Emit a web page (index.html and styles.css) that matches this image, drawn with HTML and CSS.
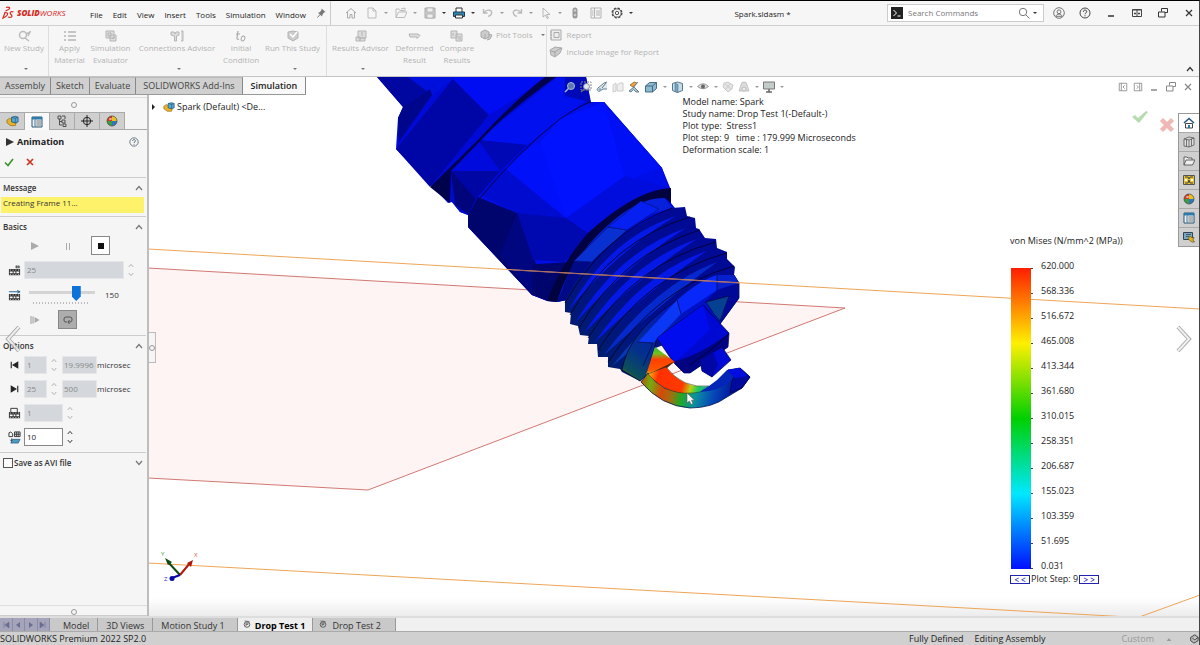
FILE: index.html
```html
<!DOCTYPE html>
<html lang="en">
<head>
<meta charset="utf-8">
<title>Spark.sldasm - SOLIDWORKS Premium 2022</title>
<link rel="stylesheet" href="styles.css">
</head>
<body>
<svg class="defs" aria-hidden="true">
  <defs>
    <symbol id="part" viewBox="0 0 14 12"><path d="M1 5l3-2 3 2 2 3 2 0-1 3H5L1 8z" fill="#e8b32c" stroke="#8a6410" stroke-width=".7"/><path d="M6 2l4-1 3 1v5l-3 1-4-1z" fill="#5aa9cf" stroke="#174f73" stroke-width=".8"/><path d="M6 2l4 1 3-1M10 3v5" fill="none" stroke="#174f73" stroke-width=".6"/></symbol>
    <symbol id="ball" viewBox="0 0 12 12"><path d="M6 6V1a5 5 0 0 1 5 5z" fill="#e8c31f"/><path d="M6 6h5a5 5 0 0 1-5 5z" fill="#2f75c0"/><path d="M6 6v5a5 5 0 0 1-5-5z" fill="#3b9d3b"/><path d="M6 6H1a5 5 0 0 1 5-5z" fill="#d83a25"/><circle cx="6" cy="6" r="5" fill="none" stroke="#444" stroke-width=".7"/><ellipse cx="4.500" cy="4" rx="1.500" ry="1" fill="#fff" opacity=".6"/></symbol>
    <symbol id="sheet" viewBox="0 0 12 12"><path d="M1 1h10v10H1z" fill="#eef4f8" stroke="#2b5572"/><path d="M1 1h10v2.500H1z" fill="#2b7bab"/><path d="M3 5h1M3 7h1M3 9h1" stroke="#2b7bab" stroke-width="1.200"/><path d="M5.500 5H10M5.500 7H10M5.500 9H10" stroke="#555" stroke-width=".8"/><path d="M4.700 3v8" stroke="#2b5572" stroke-width=".5"/></symbol>
    <symbol id="film" viewBox="0 0 14 12"><path d="M1 5h12v7H1z" fill="#333"/><path d="M2 7.500h3v2H2zM6 7.500h2v2H6zM9 7.500h3v2H9z" fill="#f5f5f5"/><path d="M2 6h1M5 6h1M8 6h1M11 6h1M2 11h1M5 11h1M8 11h1M11 11h1" stroke="#f5f5f5"/></symbol>
    <symbol id="restore" viewBox="0 0 12 12"><path d="M4.500 4.500v-3h6v4H8M1.500 5h6.500v5H1.500z" fill="none" stroke="currentColor"/></symbol>
    <symbol id="close" viewBox="0 0 12 12"><path d="M3 3l6 6M9 3l-6 6" fill="none" stroke="currentColor" stroke-width="1.200"/></symbol>
    <symbol id="min" viewBox="0 0 12 12"><path d="M3 9h6" stroke="currentColor" stroke-width="1.500"/></symbol>
    <symbol id="help" viewBox="0 0 12 12"><circle cx="6" cy="6" r="5" fill="none" stroke="currentColor" stroke-width=".9"/><path d="M4.300 4.800c0-2.300 3.500-2.200 3.400-.1 0 1.200-1.700 1.200-1.700 2.500M6 8.300v1" fill="none" stroke="currentColor"/></symbol>
    <symbol id="up" viewBox="0 0 8 6"><path d="M1 5l3-3.500L7 5" fill="none" stroke="currentColor" stroke-width="1.200"/></symbol>
    <symbol id="down" viewBox="0 0 8 6"><path d="M1 1l3 3.500L7 1" fill="none" stroke="currentColor" stroke-width="1.200"/></symbol>
    <symbol id="study" viewBox="0 0 8 8"><circle cx="4" cy="4.500" r="2.800" fill="none" stroke="#555" stroke-width=".9"/><path d="M3 3v3M3 3h2v1.500H3M1.500 1l5 .5" fill="none" stroke="#555" stroke-width=".7"/></symbol>
    <symbol id="cube" viewBox="0 0 14 12"><path d="M1.500 5l4-3.500h7v6l-4 3.500h-7z" fill="#8fb9cf" stroke="#38637b" stroke-width=".9"/><path d="M1.500 5h7l4-3.500M8.500 5v6" fill="none" stroke="#38637b" stroke-width=".9"/></symbol>
  </defs>
</svg>

<header class="titlebar">
  <a class="brand" href="#" aria-label="SOLIDWORKS home">
    <svg width="13" height="14" viewBox="0 0 13 14"><path d="M4 1.500c3-1 5 .5 2.500 2L3.500 5M3.500 6.500c3 0 3 2.500-.5 4.500L1 12l2.200-6M11.500 6C9 5 7 6.500 9 8.500s.5 3.500-3 2.500" fill="none" stroke="#d5281e" stroke-width="1.200"/></svg>
    <span class="wordmark"><b>SOLID</b>WORKS</span>
  </a>
  <nav class="menu">
    <button>File</button><button>Edit</button><button>View</button><button>Insert</button><button>Tools</button><button>Simulation</button><button>Window</button>
  </nav>
  <svg class="pin" width="9" height="10" viewBox="0 0 9 10"><path d="M4.500.5L8.500 4 7 4.500 5.500 6.500 5 8.500 1 4.800 2.800 4.300 4.500 2z" fill="#777"/><path d="M3 6.500L.5 9.500" stroke="#777"/></svg>
  <div class="quick">
    <button class="home" aria-label="Home"><svg class="i" viewBox="0 0 12 12"><path d="M1 6l5-4.500L11 6M2.500 5v6h2.500V7.500h2V11h2.500V5" fill="none" stroke="#aaa"/></svg></button>
    <button aria-label="New"><svg class="i" viewBox="0 0 12 12"><path d="M2 1h5l3 3v7H2zM7 1v3h3" fill="none" stroke="#bbb"/></svg></button><button class="dd" aria-label="New options"></button>
    <button aria-label="Open"><svg class="i" viewBox="0 0 12 12"><path d="M1 10.500V2h3l1 1.500h4V5M1 10.500l2.500-5.500H12l-2.500 5.500zM6 2l4-1v3" fill="none" stroke="#bbb"/></svg></button><button class="dd" aria-label="Open options"></button>
    <button aria-label="Save"><svg class="i" viewBox="0 0 12 12"><path d="M1 1h10v10H1z" fill="#ccc" stroke="#aaa"/><path d="M3 1h6v4H3zM3 7h6v4H3z" fill="#eee" stroke="#aaa" stroke-width=".7"/></svg></button><button class="dd on" aria-label="Save options"></button>
    <button aria-label="Print"><svg class="i" viewBox="0 0 12 12"><path d="M3 5V1h6v4" fill="#fff" stroke="#333"/><path d="M.5 5h11v4.500H.5z" fill="#2e87b5" stroke="#1d3c50"/><path d="M2.500 8h7v3h-7z" fill="#fff" stroke="#333"/></svg></button><button class="dd on" aria-label="Print options"></button>
    <button aria-label="Undo"><svg class="i" viewBox="0 0 12 12"><path d="M1.500 2v4h4M2 5.500C5 1.500 11 3 9.500 6.500 9 8.500 7 9.500 6 9" fill="none" stroke="#bbb" stroke-width="1.400"/></svg></button><button class="dd" aria-label="Undo options"></button>
    <button aria-label="Redo"><svg class="i" viewBox="0 0 12 12"><path d="M10.500 2v4h-4M10 5.500C7 1.500 1 3 2.500 6.500 3 8.500 5 9.500 6 9" fill="none" stroke="#bbb" stroke-width="1.400"/></svg></button><button class="dd" aria-label="Redo options"></button>
    <button aria-label="Select"><svg class="i" viewBox="0 0 12 12"><path d="M3 1l7 6.500H6.500l2 3.500-1.500.5-1.500-3.500L3 10z" fill="#f4f4f4" stroke="#aaa" stroke-width=".8"/></svg></button><button class="dd" aria-label="Select options"></button>
    <button aria-label="Rebuild"><svg class="i" viewBox="0 0 12 12"><rect x="3.500" y=".5" width="5" height="11" rx="2.500" fill="#999"/><circle cx="6" cy="3.500" r="1.300" fill="#ccc"/><circle cx="6" cy="8" r="1.300" fill="#ccc"/></svg></button>
    <button class="props" aria-label="File properties"><svg class="i" viewBox="0 0 12 12"><path d="M1 1h10v10H1zM4.500 1v10M6 4h4M6 6h4M6 8h4M2 4h1.500M2 6h1.500M2 8h1.500" fill="none" stroke="#aaa" stroke-width=".9"/></svg></button>
    <button class="gear" aria-label="Options"><svg class="i" viewBox="0 0 12 12"><circle cx="6" cy="6" r="4.900" fill="none" stroke="#444" stroke-width="1.200" stroke-dasharray="2.300 1.550"/><circle cx="6" cy="6" r="4.100" fill="none" stroke="#444" stroke-width=".8"/><circle cx="6" cy="6" r="1.700" fill="none" stroke="#444" stroke-width=".9"/></svg></button><button class="dd on" aria-label="More options"></button>
  </div>
  <h1 class="doc">Spark.sldasm *</h1>
  <form class="search" role="search">
    <svg width="12" height="12" viewBox="0 0 12 12"><path d="M0 0h12v12H0z" fill="#222"/><path d="M2.500 3l3 3-3 3M6.500 9h3" fill="none" stroke="#fff"/></svg>
    <input type="text" aria-label="Search Commands" placeholder="Search Commands">
    <svg width="12" height="12" viewBox="0 0 12 12"><circle cx="5" cy="5" r="3.700" fill="none" stroke="#777"/><path d="M8 8l3.500 3.500" stroke="#777"/></svg>
    <button type="button" class="dd on" aria-label="Search scope"></button>
  </form>
  <div class="winbtns">
    <button aria-label="Account"><svg class="i" viewBox="0 0 12 12"><circle cx="6" cy="6" r="5.300" fill="none" stroke="#666" stroke-width=".9"/><circle cx="6" cy="4.800" r="1.900" fill="none" stroke="#666" stroke-width=".9"/><path d="M3 9.300c0-3 6-3 6 0z" fill="none" stroke="#666" stroke-width=".9"/></svg></button>
    <button aria-label="Help"><svg class="i"><use href="#help"/></svg></button>
    <button aria-label="Minimize"><svg class="i"><use href="#min"/></svg></button>
    <button aria-label="Span displays"><svg class="i" viewBox="0 0 12 12"><path d="M1.500 2.500h9v7h-9zM6 2.500v7" fill="none" stroke="#444"/><path d="M1.500 3h9" stroke="#444"/><path d="M3 6.500h2M7 6.500h2" stroke="#444" stroke-width="1.400"/></svg></button>
    <button aria-label="Restore"><svg class="i"><use href="#restore"/></svg></button>
    <button aria-label="Close"><svg class="i"><use href="#close"/></svg></button>
  </div>
</header>

<section class="ribbon" aria-label="Simulation commands">
  <div class="group">
    <button class="cmd w49"><svg class="r" viewBox="0 0 14 12"><circle cx="6" cy="5" r="3.500" fill="none" stroke="#bbb" stroke-width="1.500"/><path d="M8 8l4 3M9 4l4-2-2 4" fill="none" stroke="#bbb" stroke-width="1.500"/></svg><span>New Study</span><i class="tri"></i></button>
  </div>
  <div class="group">
    <button class="cmd w41"><svg class="r" viewBox="0 0 14 12"><path d="M1 2h2M1 6h2M1 10h2M5 2h8M5 6h8M5 10h8" stroke="#b5b5b5" stroke-width="1.300"/></svg><span>Apply<br>Material</span></button>
    <button class="cmd w41"><svg class="r" viewBox="0 0 14 12"><path d="M2 1h8v7H2zM4 3h3v3H4zM6 5h6v6H6zM8 8l1 1 2-2" fill="#ddd" stroke="#b5b5b5"/></svg><span>Simulation<br>Evaluator</span></button>
    <button class="cmd w92"><svg class="r" viewBox="0 0 14 12"><path d="M1 2h3l1 2 1-2h3v3L6.500 6v5h-2V6L1 5zM11 1h2v10h-2" fill="#ddd" stroke="#b5b5b5"/></svg><span>Connections Advisor</span><i class="tri"></i></button>
    <button class="cmd w36"><svg class="r" viewBox="0 0 14 12"><path d="M4 1L3 8c0 1.500 1 1.500 2 1M2 4h4" fill="none" stroke="#aaa" stroke-width="1.200"/><ellipse cx="9" cy="8.500" rx="1.800" ry="2.500" fill="none" stroke="#aaa" transform="rotate(15 9 8.500)"/></svg><span>Initial<br>Condition</span></button>
    <button class="cmd w67"><svg class="r" viewBox="0 0 14 12"><path d="M2 2l5-1 5 1v6l-5 3-5-3z" fill="#ccc" stroke="#b5b5b5"/><path d="M4 4l3 3 4-5" fill="none" stroke="#fff" stroke-width="1.500"/></svg><span>Run This Study</span><i class="tri"></i></button>
  </div>
  <div class="group">
    <button class="cmd w67"><svg class="r" viewBox="0 0 14 12"><path d="M4 1h8v7H4zM2 7h4v4H2zM6 8h5v3H6zM8 2v4" fill="#ddd" stroke="#b5b5b5"/></svg><span>Results Advisor</span><i class="tri"></i></button>
    <button class="cmd w41"><svg class="r" viewBox="0 0 14 12"><path d="M1 4h9l2 1.500L9 8.500V7H2z" fill="#ddd" stroke="#b5b5b5"/></svg><span>Deformed<br>Result</span></button>
    <button class="cmd w44"><svg class="r" viewBox="0 0 14 12"><path d="M1 1h6v7H1zM6 4h6v7H6zM3 3v3M8 7h3M8 9h3" fill="#ddd" stroke="#b5b5b5"/></svg><span>Compare<br>Results</span></button>
    <button class="line"><svg class="r" viewBox="0 0 14 12"><path d="M2 3l4-2 4 2v5l-4 2-4-2zM6 5v5M9 5l4 1-2 4-3 1" fill="#ccc" stroke="#aaa"/></svg><span>Plot Tools</span><i class="tri side"></i></button>
  </div>
  <div class="group stack">
    <button class="line"><svg class="r" viewBox="0 0 14 12"><path d="M2 1h10v10H2zM5 3.500h5v5H5zM1 3h2M1 6h2M1 9h2" fill="#eee" stroke="#aaa"/></svg><span>Report</span></button>
    <button class="line"><svg class="r" viewBox="0 0 14 12"><path d="M1 4l5-3 7 1-2 5-5 4-4-2z" fill="#ccc" stroke="#aaa"/><path d="M2 5l4 1 6-4M6 6v4" fill="none" stroke="#999" stroke-width=".8"/></svg><span>Include Image for Report</span></button>
  </div>
  <button class="fold" aria-label="Collapse ribbon"><svg width="8" height="6"><use href="#up"/></svg></button>
</section>

<main class="work">
  <nav class="cmdtabs">
    <button>Assembly</button><button>Sketch</button><button>Evaluate</button><button>SOLIDWORKS Add-Ins</button><button class="active">Simulation</button>
  </nav>

  <aside class="panel">
    <div class="grip"></div>
    <div class="ptabs">
      <button aria-label="Feature tree"><svg width="13" height="12"><use href="#part"/></svg></button>
      <button class="active" aria-label="Property manager"><svg width="12" height="12"><use href="#sheet"/></svg></button>
      <button aria-label="Configurations"><svg width="12" height="12" viewBox="0 0 12 12"><path d="M2 1h3v3H2zM3.500 4v6H6M3.500 6.500H6M6 1h3v3M6 5h3v3H6zM7 9h3v2.500H7z" fill="none" stroke="#444" stroke-width=".9"/></svg></button>
      <button aria-label="Dimensions"><svg width="12" height="12" viewBox="0 0 12 12"><circle cx="6" cy="6" r="3.700" fill="none" stroke="#222"/><path d="M6 0v12M0 6h12" stroke="#222"/></svg></button>
      <button aria-label="Appearances"><svg width="12" height="12"><use href="#ball"/></svg></button>
    </div>
    <div class="phead">
      <svg width="9" height="10" viewBox="0 0 9 10"><path d="M1 1l8 4-8 4z" fill="#333"/></svg>
      <h2>Animation</h2>
      <button aria-label="Animation help"><svg width="10" height="10" viewBox="0 0 12 12"><use href="#help"/></svg></button>
    </div>
    <div class="confirm">
      <button aria-label="OK"><svg width="10" height="10" viewBox="0 0 10 10"><path d="M1 5.500l3 3L9 2" fill="none" stroke="#3c9128" stroke-width="1.600"/></svg></button>
      <button aria-label="Cancel"><svg width="10" height="10" viewBox="0 0 10 10"><path d="M2 2l6 6M8 2L2 8" fill="none" stroke="#d0341f" stroke-width="1.700"/></svg></button>
    </div>
    <section class="box">
      <h3>Message<svg width="8" height="6"><use href="#up"/></svg></h3>
      <p class="msg">Creating Frame 11...</p>
    </section>
    <section class="box">
      <h3>Basics<svg width="8" height="6"><use href="#up"/></svg></h3>
      <div class="play">
        <button aria-label="Play"><svg width="10" height="10" viewBox="0 0 10 10"><path d="M1 1l8 4-8 4z" fill="#aaa"/></svg></button>
        <button aria-label="Pause"><svg width="10" height="10" viewBox="0 0 10 10"><path d="M3.500 2v7M6.500 2v7" stroke="#aaa"/></svg></button>
        <button class="boxed" aria-label="Stop"><svg width="8" height="8"><path d="M1 1h6v6H1z" fill="#111"/></svg></button>
      </div>
      <div class="field frames">
        <svg width="13" height="12" viewBox="0 0 14 12"><use href="#film"/><path d="M9 1v3M11 1v3M8 2h5M8 3.500h5" stroke="#333" stroke-width=".7"/></svg>
        <input class="grow" aria-label="Frames" value="25" disabled>
        <span class="spin off"><button aria-label="More frames"><svg width="6" height="5" viewBox="0 0 8 6"><use href="#up"/></svg></button><button aria-label="Fewer frames"><svg width="6" height="5" viewBox="0 0 8 6"><use href="#down"/></svg></button></span>
      </div>
      <div class="field speed">
        <svg width="13" height="12" viewBox="0 0 14 12"><use href="#film"/><path d="M1 2.500h12M10 1l3 1.500L10 4" fill="none" stroke="#1d5f8f"/></svg>
        <span class="slide"><input type="range" id="speed" aria-label="Speed" min="0" max="200" value="150"></span>
        <output for="speed">150</output>
      </div>
      <div class="play modes">
        <button aria-label="Play once"><svg width="10" height="10" viewBox="0 0 10 10"><path d="M1 1v8M3 1.500v7" stroke="#999"/><path d="M4.500 2L9.500 5l-5 3z" fill="#aaa"/></svg></button>
        <button class="boxed dark" aria-label="Loop"><svg width="12" height="10" viewBox="0 0 12 10"><path d="M5 7H3a2 2 0 0 1-1-2V4a2 2 0 0 1 2-2h4a2 2 0 0 1 2 2v1a2 2 0 0 1-2 2H6M7.500 5L6 7l1.500 2" fill="none" stroke="#555"/></svg></button>
      </div>
    </section>
    <section class="box opts">
      <h3>Options<svg width="8" height="6"><use href="#up"/></svg></h3>
      <div class="field">
        <svg width="13" height="12" viewBox="0 0 14 12"><path d="M3.500 2.500v7M10.500 3v6L5.500 6z" fill="#222" stroke="#222" stroke-width="1.200"/></svg>
        <input class="s" aria-label="Start frame" value="1" disabled>
        <span class="spin off"><button aria-label="Start up"><svg width="6" height="5" viewBox="0 0 8 6"><use href="#up"/></svg></button><button aria-label="Start down"><svg width="6" height="5" viewBox="0 0 8 6"><use href="#down"/></svg></button></span>
        <input class="m" id="t0" value="19.9996" disabled><label for="t0">microsec</label>
      </div>
      <div class="field">
        <svg width="13" height="12" viewBox="0 0 14 12"><path d="M10.500 2.500v7M3.500 3v6l5-3z" fill="#222" stroke="#222" stroke-width="1.200"/></svg>
        <input class="s" aria-label="End frame" value="25" disabled>
        <span class="spin off"><button aria-label="End up"><svg width="6" height="5" viewBox="0 0 8 6"><use href="#up"/></svg></button><button aria-label="End down"><svg width="6" height="5" viewBox="0 0 8 6"><use href="#down"/></svg></button></span>
        <input class="m" id="t1" value="500" disabled><label for="t1">microsec</label>
      </div>
      <div class="field">
        <svg width="13" height="12" viewBox="0 0 14 12"><use href="#film"/><path d="M3 5V1h7v4" fill="none" stroke="#333"/></svg>
        <input class="l" aria-label="Increment" value="1" disabled>
        <span class="spin off"><button aria-label="Increment up"><svg width="6" height="5" viewBox="0 0 8 6"><use href="#up"/></svg></button><button aria-label="Increment down"><svg width="6" height="5" viewBox="0 0 8 6"><use href="#down"/></svg></button></span>
      </div>
      <div class="field">
        <svg width="13" height="13" viewBox="0 0 14 14"><path d="M1 2l2-1 2 2v3H1zM7 1h6v5H7zM9 1v5M11 1v5M7 3.500h6" fill="none" stroke="#333"/><path d="M4 8v3M2.500 9.500L4 11l1.500-1.500" fill="none" stroke="#333"/><path d="M5 9h8l-2 4H3z" fill="#4c9cc4" stroke="#1d4e70" stroke-width=".7"/></svg>
        <input class="l" aria-label="Frame rate" value="10">
        <span class="spin"><button aria-label="Rate up"><svg width="6" height="5" viewBox="0 0 8 6"><use href="#up"/></svg></button><button aria-label="Rate down"><svg width="6" height="5" viewBox="0 0 8 6"><use href="#down"/></svg></button></span>
      </div>
    </section>
    <section class="box avi">
      <h3><label><input type="checkbox">Save as AVI file</label><svg width="8" height="6"><use href="#down"/></svg></h3>
    </section>
    <div class="grip foot"></div>
    <button class="prev" aria-label="Previous"><svg width="16" height="28" viewBox="0 0 16 28"><path d="M14 2L3 14l11 12" fill="none" stroke="#999" stroke-width="4"/><path d="M14 2L3 14l11 12" fill="none" stroke="#eee" stroke-width="2"/></svg></button>
  </aside>

  <section class="view" aria-label="Graphics area">
    <svg class="scene" viewBox="149 77 1050 539" preserveAspectRatio="xMidYMin slice" aria-label="Spark plug stress plot">
      <defs>
        <linearGradient id="g1" x1="640" y1="375" x2="735" y2="395" gradientUnits="userSpaceOnUse"><stop offset="0" stop-color="#d83a0a"/><stop offset=".12" stop-color="#6cb010"/><stop offset=".25" stop-color="#d84808"/><stop offset=".36" stop-color="#a07010"/><stop offset=".46" stop-color="#22a824"/><stop offset=".6" stop-color="#0b92a0"/><stop offset=".78" stop-color="#0648b8"/><stop offset="1" stop-color="#000f98"/></linearGradient>
        <linearGradient id="g2" x1="650" y1="370" x2="712" y2="388" gradientUnits="userSpaceOnUse"><stop offset="0" stop-color="#ffb010"/><stop offset=".15" stop-color="#ff3000"/><stop offset=".55" stop-color="#ff3a00"/><stop offset=".68" stop-color="#b8d010"/><stop offset=".8" stop-color="#20c860"/><stop offset="1" stop-color="#08a0c8"/></linearGradient>
        <linearGradient id="g3" x1="655" y1="346" x2="655" y2="376" gradientUnits="userSpaceOnUse"><stop offset="0" stop-color="#20b840"/><stop offset=".25" stop-color="#70c020"/><stop offset=".45" stop-color="#ff4000"/><stop offset=".8" stop-color="#ff5800"/><stop offset="1" stop-color="#e8d020"/></linearGradient>
        <linearGradient id="g4" x1="600" y1="360" x2="690" y2="250" gradientUnits="userSpaceOnUse"><stop offset="0" stop-color="#001e6c"/><stop offset=".5" stop-color="#000e8c"/><stop offset="1" stop-color="#000a94"/></linearGradient>
        <linearGradient id="g5" x1="638" y1="384" x2="690" y2="310" gradientUnits="userSpaceOnUse"><stop offset="0" stop-color="#50681c"/><stop offset=".06" stop-color="#0c5058"/><stop offset=".3" stop-color="#04308c"/><stop offset="1" stop-color="#0010c8"/></linearGradient>
        <linearGradient id="floor" x1="0" y1="598" x2="0" y2="616" gradientUnits="userSpaceOnUse"><stop offset="0" stop-color="#fff"/><stop offset="1" stop-color="#ececec"/></linearGradient>
      </defs>
      <path d="M148 598h1052v20H148z" fill="url(#floor)"/>
      <path d="M148 268L845 308 368 490 148 478z" fill="#fdf4f3" stroke="#cc6a64" stroke-width=".9"/>
      <path d="M148 563L1138 617.500 1200 595" fill="none" stroke="#eda557"/>
      <!-- shell -->
      <path d="M377 77H586L591 102H604L662 168 671 190V203L700 240 600 330 567 300 556 302 547 301 532 295 468 227V215L460 212 452 202 448 203 396 149 398 118 403 107z" fill="#000ad8"/>
      <path d="M377 77H410L430 89 403 107z" fill="#0006a0"/><path d="M408 77H455L432 95z" fill="#0010dc"/><path d="M403 107L430 89 432 95 399 142 398 118z" fill="#00068c"/>
      <path d="M396 149L453 79 489 115 430 187z" fill="#0006a6"/><path d="M453 79L489 115 550 77H456z" fill="#000cf2"/>
      <path d="M452 202L450 172 492 131 552 77H557L586 77 590 102 570 105 500 160 470 197 468 215 460 212z" fill="#0009d0"/>
      <path d="M478 140L556 78 584 77 590 98 527 145z" fill="#0010ee"/><path d="M478 140L527 145 500 171z" fill="#0007b4"/><path d="M451 171L478 140 500 171z" fill="#000adc"/><path d="M451 171H500L476 199z" fill="#0006a4"/><path d="M451 171L476 199 468 214 455 205z" fill="#00057c"/>
      <path d="M565 77H586L590 102 565 96z" fill="#0009b8"/>
      <path d="M430 187L478 140Q515 100 545 77L556 77Q510 110 488 133L451 171 450 203z" fill="#00034c"/>
      <path d="M468 215L478 197Q520 150 560 119 582 104 591 102H604L662 168 669 188Q610 215 572 258L548 301 532 295 468 227z" fill="#000ee8"/>
      <path d="M480 195L505 168 566 218 517 213z" fill="#000bd0"/><path d="M505 168L535 143 590 160 566 218z" fill="#0011fa"/><path d="M560 119L604 102 640 175 566 218 540 142z" fill="#0012ff"/><path d="M604 102L662 168 625 180z" fill="#0010f4"/>
      <path d="M566 218L625 176 669 188Q620 210 592 236z" fill="#000ddc"/><path d="M478 197L517 213 536 264 570 262 548 301 532 295 468 227V215z" fill="#00056e"/><path d="M517 213L566 218 592 236 564 262 533 260z" fill="#0008b0"/><path d="M517 213L533 261 532 295 500 255z" fill="#000580"/><path d="M480 198Q520 150 560 119 582 104 591 102" fill="none" stroke="#00044c"/>
      <path d="M671 188V203L666 199Q640 197 605 229 570 260 557 302L547 301Q560 265 588 233 630 195 662 189z" fill="#000340"/>
      <!-- collar -->
      <path d="M557 302Q570 260 606 227 638 197 665 198L672 208Q620 220 592 260L567 300z" fill="#0720dc"/>
      <path d="M574 261H592L567 300 557 302z" fill="#000a86"/><path d="M574 261L608 227 627 230 592 262z" fill="#0930d0" stroke="#001070" stroke-width=".6"/><path d="M608 227L641 201 659 209 627 230z" fill="#0520f0" stroke="#001070" stroke-width=".6"/>
      <!-- thread -->
      <path d="M565 301Q590 245 672 208L685 207 687 216 695 218 696 228 699 229 705 238 716 239 717 248 727 252V259L735 267 734 275 739 283V298L720 324 650 350 640 381 622 372 620 369 608 367V357L598 357 597 344 588 344 589 336 580 335 578 326 570 324 571 313 565 312z" fill="url(#g4)"/>
      <g fill="#0418e6">
        <path d="M568 311Q609 238 676 216 617 251 568 311z"/>
        <path d="M575 323Q619 251 686 228 627 265 575 323z"/>
        <path d="M584 333Q630 262 697 239 638 277 584 333z"/>
        <path d="M594 343Q643 272 707 251 651 288 594 343z"/>
        <path d="M603 356Q655 285 717 262 664 301 603 356z" fill="#0529cc"/>
        <path d="M612 366Q665 298 724 276 675 315 612 366z" fill="#0638b4"/>
      </g>
      <g fill="none" stroke="#00022e" stroke-width=".9">
        <path d="M565 303Q604 233 672 208M570 315Q612 240 690 217M579 328Q622 254 700 230M588 338Q634 264 716 242M598 350Q646 275 727 253M608 362Q658 287 734 266"/>
      </g>
      <!-- rim -->
      <path d="M640 381L622 370Q628 335 670 305 705 277 734 275L739 283V298L720 324 703 305 657 338 647 375z" fill="url(#g5)" stroke="#000430" stroke-width=".8"/>
      <path d="M638 342L677 300 681 314 653 343z" fill="#0a38f4"/><path d="M677 300Q700 280 717 275V290L681 314z" fill="#0728f8"/><path d="M717 275L734 275 739 283 717 290z" fill="#0520cc"/><path d="M717 290L739 283V298L720 324 729 296 704 303z" fill="#000898"/><path d="M706 302L729 296 720 321 714 314z" fill="#064090" stroke="#000430" stroke-width=".6"/>
      <path d="M677 300L681 314M717 275V290M638 342L653 343L643 366" fill="none" stroke="#000848" stroke-width=".7"/>
      <!-- insulator -->
      <path d="M657 338L703 305 729 333 728 347 690 373 684 373 673 362z" fill="#0009d2" stroke="#00034c" stroke-width=".7"/>
      <path d="M657 338L703 305 710 330 675 362z" fill="#000cee"/><path d="M673 362Q700 355 728 334L728 347 690 373 684 373z" fill="#000480"/><path d="M690 365Q712 350 729 334" fill="none" stroke="#00023c"/>
      <path d="M700 360L722 347 731 360 712 377 702 371z" fill="#000bd8" stroke="#00034c" stroke-width=".7"/><path d="M700 360L713 352 718 365 712 377 702 371z" fill="#0007a4"/>
      <!-- ground strap -->
      <path d="M655 347L675 362 665 368 646 375z" fill="url(#g3)"/><path d="M655 371L675 361 666 369z" fill="#5a2508"/>
      <path d="M641 382L648 373Q662 394 688 392 708 392 722 380L728 370 740 368 750 377 742 388 727 397Q712 408 690 408 661 406 641 382z" fill="url(#g1)" stroke="#00134c" stroke-width=".8"/>
      <path d="M648 374L666 367Q683 389 709 386L700 392Q668 398 648 374z" fill="url(#g2)" stroke="#303010" stroke-width=".5"/>
      <path d="M709 386L717 380 727 370 740 368 732 380Q720 391 700 392z" fill="#0426b8"/><path d="M732 380L740 368 750 377 742 388 730 393z" fill="#000a9c" stroke="#000540" stroke-width=".7"/><path d="M727 370L740 368 748 376 735 378z" fill="#000dde"/>
      <path d="M148 249L1200 309" fill="none" stroke="#eda557"/><path d="M513 270L739 283" stroke="#9a6268"/>
      <path d="M687 393v10l2.500-2 1.500 3.500 2-1-1.500-3.300h3z" fill="#fff" stroke="#555" stroke-width=".6"/>
      <!-- triad -->
      <g stroke-width="2"><path d="M180 575L168 562" stroke="#0b4a14"/><path d="M165 558l7 4-4 3z" fill="#0b4a14"/><path d="M180 575L190 563" stroke="#b01808"/><path d="M193 560l-2 7-4-4z" fill="#b01808"/><path d="M180 575L172 578" stroke="#0808a8"/><circle cx="172" cy="578.500" r="2.500" fill="#0808a8"/></g>
      <g class="axis"><text x="161" y="556" fill="#3a9a4a">Y</text><text x="194" y="557" fill="#d85a50">X</text><text x="164" y="581" fill="#3030c0">Z</text></g>
    </svg>

    <div class="tree"><i></i><svg width="12" height="12"><use href="#part"/></svg><span>Spark (Default) &lt;De...</span></div>

    <div class="hud">
      <button aria-label="Zoom to fit"><svg class="i" viewBox="0 0 12 12"><circle cx="7" cy="5" r="3.500" fill="#5d78b0" stroke="#a9b9d0"/><path d="M4.500 7.500L1 11" stroke="#a9b9d0" stroke-width="1.500"/></svg></button>
      <button aria-label="Zoom to area"><svg class="i" viewBox="0 0 12 12"><path d="M1 1h10v8H1z" fill="none" stroke="#888" stroke-dasharray="2 1"/><circle cx="6.500" cy="5.500" r="3" fill="#dce8ee" stroke="#889"/><path d="M4 8l-3 3" stroke="#667" stroke-width="1.500"/></svg></button>
      <button aria-label="Previous view"><svg class="i" viewBox="0 0 12 12"><path d="M11 1L8 2 2 7c-2 2 0 4 2 3l3-2h4M10 2L6 7" fill="#dfe9ee" stroke="#667f8e"/><circle cx="4" cy="8.500" r="1.500" fill="#8fb0c0"/></svg></button>
      <button aria-label="Section view"><svg class="i" viewBox="0 0 12 12"><path d="M1 4l3-2v8l-3 1zM5 4l3-2h3v8H5z" fill="#eee" stroke="#ccc"/></svg></button>
      <button aria-label="Dynamic annotation"><svg class="i" viewBox="0 0 12 12"><path d="M2 4l4-3 3 1-4 4z" fill="#e8a440" stroke="#a87a40"/><path d="M1 10l5-4 5 5H8L5.500 8.500 3 11zM5 7l5-6" fill="#a8c4d4" stroke="#6c8494"/></svg></button>
      <button aria-label="View orientation"><svg width="14" height="12"><use href="#cube"/></svg></button><button class="dd" aria-label="Orientation options"></button>
      <button aria-label="Display style"><svg width="13" height="12" viewBox="0 0 13 12"><path d="M1.500 2.500l5-1.500 5 1.500v7l-5 2-5-2z" fill="#c8dce6" stroke="#51788e"/><path d="M4 2v8.500l3 1V3.500z" fill="#72a5c0" stroke="#51788e" stroke-width=".6"/></svg></button><button class="dd" aria-label="Style options"></button>
      <button aria-label="Hide or show"><svg class="i" viewBox="0 0 12 12"><path d="M.5 5.500Q6 0 11.500 5.500 6 10 .5 5.500z" fill="#ddd" stroke="#999"/><circle cx="6" cy="5.500" r="2" fill="#666"/></svg></button><button class="dd" aria-label="Visibility options"></button>
      <button aria-label="Edit appearance"><svg class="i" viewBox="0 0 12 12"><path d="M2 2l4-1 5 3-1 4-4 3-5-5z" fill="#e4e4e4" stroke="#ccc"/><path d="M3 3l6 5M8 3L4 8" stroke="#ccc"/></svg></button>
      <button aria-label="Apply scene"><svg class="i" viewBox="0 0 12 12"><path d="M3 4a3 3 0 0 1 6 0l2 6H1z" fill="#ddd" stroke="#c4c4c4"/><circle cx="6" cy="8" r="2" fill="#eee" stroke="#bbb"/></svg></button><button class="dd" aria-label="Scene options"></button>
      <button aria-label="View settings"><svg class="i" viewBox="0 0 12 12"><path d="M.5 1h11v7H.5z" fill="#c4ccc8" stroke="#777"/><path d="M6 8v3M3 11h6" stroke="#666" stroke-width="1.500"/></svg></button><button class="dd" aria-label="Settings options"></button>
    </div>

    <div class="docbtns">
      <button aria-label="Collapse left"><svg width="10" height="10" viewBox="0 0 12 12"><path d="M1.500 1.500h9v9h-9zM4 1.500v9M8 4L6 6l2 2" fill="none" stroke="currentColor"/></svg></button>
      <button aria-label="Collapse right"><svg width="10" height="10" viewBox="0 0 12 12"><path d="M1.500 1.500h9v9h-9zM8 1.500v9M4.500 4l2 2-2 2" fill="none" stroke="currentColor"/></svg></button>
      <button aria-label="Minimize document"><svg class="i"><use href="#min"/></svg></button>
      <button aria-label="Restore document"><svg class="i"><use href="#restore"/></svg></button>
      <button aria-label="Close document"><svg class="i"><use href="#close"/></svg></button>
    </div>
    <div class="corner">
      <button aria-label="Accept"><svg width="18" height="14" viewBox="0 0 18 14"><path d="M1 7l3-2 3 3 8-7 2 1L8 13z" fill="#b7dab0"/></svg></button>
      <button class="no" aria-label="Reject"><svg width="16" height="16" viewBox="0 0 16 16"><path d="M2.500 2.500l11 11M13.500 2.500l-11 11" stroke="#efb8b5" stroke-width="4.500"/></svg></button>
    </div>

    <div class="info">Model name: Spark<br>Study name: Drop Test 1(-Default-)<br>Plot type:&nbsp; Stress1<br>Plot step: 9 &nbsp; time : 179.999 Microseconds<br>Deformation scale: 1</div>

    <div class="taskpane">
      <button class="active" aria-label="Home"><svg class="i" viewBox="0 0 12 12"><path d="M1 6l5-4.500L11 6" fill="none" stroke="#2a5878" stroke-width="1.600"/><path d="M2.500 6.500h7V11h-7z" fill="#fff" stroke="#444"/><path d="M5 8h2v3H5z" fill="#2a7aa8"/></svg></button>
      <button aria-label="Design library"><svg class="i" viewBox="0 0 12 12"><path d="M1 3l5-2 5 1v7l-5 2-5-1zM1 3l5 1 5-2M6 4v7M3.500 3.500v7M8.500 3v7" fill="#ddd" stroke="#555" stroke-width=".8"/></svg></button>
      <button aria-label="File explorer"><svg class="i" viewBox="0 0 12 12"><path d="M1 10V2h3l1 1h4v2M1 10l2-5h9l-2.500 5z" fill="#eee" stroke="#555" stroke-width=".9"/></svg></button>
      <button aria-label="View palette"><svg class="i" viewBox="0 0 12 12"><path d="M.5 1.500h11v9H.5z" fill="#e9c435" stroke="#555"/><path d="M2 3h3l1 2 1-2h3M2 9h3l1-3 1 3h3" fill="none" stroke="#444"/><path d="M2 5h2v2H2zM8 5h2v2H8z" fill="#fff"/></svg></button>
      <button aria-label="Appearances"><svg class="i"><use href="#ball"/></svg></button>
      <button aria-label="Custom properties"><svg class="i"><use href="#sheet"/></svg></button>
      <button aria-label="Forum"><svg class="i" viewBox="0 0 12 12"><path d="M.5 1.500h9v7h-9z" fill="#78a9c0" stroke="#345"/><path d="M3 3.500h5M3 5.500h3" stroke="#345" stroke-width=".8"/><path d="M7 5l2 2 2-1-1 3 1.500 2H9L5 8z" fill="#e3b52e" stroke="#665010" stroke-width=".7"/></svg></button>
    </div>

    <figure class="legend">
      <figcaption>von Mises (N/mm^2 (MPa))</figcaption>
      <div class="scale">
        <div class="bar"></div><div class="ticks"></div>
        <ul><li>620.000</li><li>568.336</li><li>516.672</li><li>465.008</li><li>413.344</li><li>361.680</li><li>310.015</li><li>258.351</li><li>206.687</li><li>155.023</li><li>103.359</li><li>51.695</li><li>0.031</li></ul>
      </div>
      <div class="step"><button>&lt;&nbsp;&lt;</button><span>Plot Step: 9</span><button>&gt;&nbsp;&gt;</button></div>
    </figure>
    <button class="flap" aria-label="Hide panel"></button>
    <button class="next" aria-label="Next"><svg width="16" height="28" viewBox="0 0 16 28"><path d="M2 2l11 12L2 26" fill="none" stroke="#aaa" stroke-width="4"/><path d="M2 2l11 12L2 26" fill="none" stroke="#f0f0f0" stroke-width="2"/></svg></button>
  </section>
</main>

<nav class="studytabs">
  <div class="steps">
    <button aria-label="First"><svg width="8" height="8" viewBox="0 0 8 8"><path d="M2 1v6M7 1v6L3 4z" fill="#6c6c92" stroke="#6c6c92" stroke-width=".6"/></svg></button>
    <button aria-label="Back"><svg width="8" height="8" viewBox="0 0 8 8"><path d="M6 1v6L2 4z" fill="#6c6c92"/></svg></button>
    <button aria-label="Forward"><svg width="8" height="8" viewBox="0 0 8 8"><path d="M2 1v6l4-3z" fill="#6c6c92"/></svg></button>
    <button aria-label="Last"><svg width="8" height="8" viewBox="0 0 8 8"><path d="M6 1v6M1 1v6l4-3z" fill="#6c6c92" stroke="#6c6c92" stroke-width=".6"/></svg></button>
  </div>
  <button class="tab first">Model</button><button class="tab">3D Views</button><button class="tab motion">Motion Study 1</button>
  <button class="tab study active"><svg width="8" height="8"><use href="#study"/></svg>Drop Test 1</button><button class="tab study"><svg width="8" height="8"><use href="#study"/></svg>Drop Test 2</button>
</nav>
<footer class="status">
  <span class="ver">SOLIDWORKS Premium 2022 SP2.0</span>
  <span>Fully Defined</span><span class="edit">Editing Assembly</span>
  <button class="custom">Custom<svg width="6" height="5" viewBox="0 0 8 6"><path d="M4 1l3 4H1z" fill="#999"/></svg></button>
  <svg width="10" height="10" viewBox="0 0 12 12"><path d="M2 4l5-3 4 3v4l-5 3-4-3zM4 5l3 2 4-3" fill="#bbb" stroke="#333"/></svg>
</footer>
</body>
</html>
```
FILE: styles.css
```css
* { box-sizing: border-box; }
body {
  margin: 0;
  min-height: 100vh;
  display: flex;
  flex-direction: column;
  background: #f5f5f5;
  color: #222;
  font: 8px/12px "Open Sans", "Noto Sans", sans-serif;
  border-top: 1px solid #000;
  border-right: 1px solid #444;
}
button {
  margin: 0; padding: 0; border: 0; background: none;
  font: inherit; color: inherit;
  display: flex; align-items: center; justify-content: center;
}
h1, h2, h3, p, ul, figure { margin: 0; padding: 0; font: inherit; }
ul { list-style: none; }
svg { display: block; flex: none; }
.defs { position: absolute; width: 0; height: 0; }
.i { width: 12px; height: 12px; }
.dd::before {
  content: ""; border: 2px solid transparent;
  border-top-color: #999; border-bottom: 0;
}
.dd.on::before { border-top-color: #333; }

/* title bar */
.titlebar { display: flex; align-items: center; height: 25px; background: #f6f6f6; border-bottom: 1px solid #cfcfcf; }
.brand { display: flex; align-items: center; width: 84px; padding-left: 2px; gap: 2px; color: #d5281e; text-decoration: none; }
.wordmark { font: italic 8px/12px "Open Sans", sans-serif; }
.wordmark b { font-weight: 800; }
.menu { display: flex; gap: 10px; padding-left: 6px; width: 233px; padding-top: 3px; }
.menu button { white-space: nowrap; }
.quick { display: flex; align-items: center; height: 24px; margin-left: 4px; padding-left: 12px; border-left: 1px solid #ccc; }
.quick button { width: 15px; height: 16px; }
.quick .dd { width: 14px; }
.quick .home, .quick .props { margin-right: 6px; }
.quick .props { margin-left: 6px; }
.doc { flex: 1; text-align: center; padding-top: 2px; }
.search { display: flex; align-items: center; width: 157px; height: 18px; padding: 0 3px; background: #fff; border: 1px solid #ccc; }
.search input { flex: 1; min-width: 0; border: 0; padding: 0 5px; font: inherit; background: none; }
.search input::placeholder { color: #777; opacity: 1; }
.search .dd { width: 10px; }
.winbtns { display: flex; gap: 14px; padding: 0 4px 0 9px; color: #333; }

/* ribbon */
.ribbon { display: flex; height: 51px; color: #b4b4b4; border-bottom: 1px solid #c4c4c4; background: #f6f6f6; }
.group { display: flex; align-items: flex-start; border-right: 1px solid #ddd; }
.group.stack { flex-direction: column; border: 0; }
.r { width: 14px; height: 12px; }
.cmd { position: relative; flex-direction: column; justify-content: flex-start; height: 50px; padding-top: 4px; text-align: center; white-space: nowrap; }
.tri { position: absolute; left: 50%; bottom: 6px; border: 2px solid transparent; border-top-color: #777; border-bottom: 0; }
.tri.side { position: static; margin-left: 6px; }
.w36 { width: 36px; } .w41 { width: 41px; } .w44 { width: 44px; }
.w49 { width: 48px; } .w67 { width: 67px; } .w92 { width: 92px; }
.line { height: 17px; gap: 3px; padding: 0 1px 0 0; white-space: nowrap; }
.stack .line { padding-left: 2px; }
.fold { margin: auto 5px 4px auto; color: #333; }

/* work area */
.work { flex: 1; display: grid; grid-template: 18px 1fr / 149px 1fr; }
.cmdtabs { grid-area: 1 / 1 / 2 / 3; justify-self: start; z-index: 2; display: flex; font-size: 9px; color: #444; border-bottom: 1px solid #999; }
.cmdtabs button { padding: 0 5px; height: 17px; background: #d0d0d0; border-right: 1px solid #888; border-top: 1px solid #bbb; white-space: nowrap; }
.cmdtabs .active { padding: 0 8px; background: #f8f8f8; font-weight: 600; color: #222; border-top: 0; margin-bottom: -1px; }
.cmdtabs button:nth-child(4) { padding: 0 7px; }
.panel { grid-area: 2 / 1 / 3 / 2; position: relative; z-index: 1; display: flex; flex-direction: column; background: #f5f5f5; border-right: 2px solid #bdbdbd; color: #333; }
.grip { height: 15px; margin-top: 2px; border-top: 1px solid #ddd; display: flex; justify-content: center; padding-top: 4px; }
.grip::before { content: ""; width: 4px; height: 4px; border: 1px solid #999; border-radius: 50%; }
.grip.foot { margin-top: auto; height: 11px; padding-top: 3px; border-bottom: 1px solid #ccc; }
.ptabs { display: flex; height: 18px; border-bottom: 1px solid #aaa; }
.ptabs button { width: 25px; height: 17px; background: #cfcfcf; border: 1px solid #aaa; border-left: 0; border-bottom: 0; }
.ptabs .active { background: #fafafa; height: 18px; }
.phead { display: flex; align-items: center; gap: 3px; padding: 5px 8px 0 5px; font-size: 9px; line-height: 14px; }
.phead h2 { flex: 1; font-weight: 700; color: #222; }
.phead button { color: #456; }
.confirm { display: flex; gap: 11px; padding: 8px 4px 10px; }
.box { border-top: 1px solid #ccc; margin-right: 1px; padding: 0 3px 3px 3px; }
.box h3 { display: flex; align-items: center; justify-content: space-between; height: 20px; font-weight: 600; }
.box h3 > svg { color: #777; }
.box h3 label { display: flex; align-items: center; gap: 1px; }
.msg { margin: -1px -1px 0 -2px; height: 16px; padding-left: 2px; background: #fff26b; }
.play { display: flex; gap: 14px; padding-left: 22px; margin-top: -1px; }
.play button { width: 19px; height: 19px; }
.boxed { border: 1px solid #888; background: #fff; }
.play .boxed.dark { background: #adadad; }
.field { display: flex; align-items: center; height: 24px; padding-left: 5px; }
.field > svg { margin-right: 3px; }
.field input:not([type]) { height: 18px; min-width: 0; padding: 0 2px 2px; font: inherit; color: #222; border: 1px solid #888; background: #fff; }
.field input:disabled:not([type]) { background: #d4d8dc; border-color: #e4e6e8; color: #888; }
.field .grow { width: 100px; }
.field .s { width: 23px; } .field .l { width: 39px; }
.field .m:not([type]) { width: 35px; padding-left: 1px; padding-right: 0; }
.spin { display: flex; flex-direction: column; gap: 4px; width: 12px; align-items: center; margin: 0 1px; color: #222; }
.spin.off { color: #aaa; }
.opts h3 { margin-bottom: -3px; }
.opts .m { margin-left: 1px; }
.frames { margin-top: 2px; height: 26px; }
.speed { height: 24px; }
.slide { width: 66px; height: 18px; margin-left: 5px; background: repeating-linear-gradient(90deg, #bbb 0 1px, transparent 1px 3px) 4px 16px / 57px 2px no-repeat; }
.slide input { appearance: none; width: 66px; height: 15px; margin: 0; background: linear-gradient(#d4d4d4, #d4d4d4) 0 5px / 100% 3px no-repeat; display: block; }
.slide input::-webkit-slider-thumb { appearance: none; width: 9px; height: 15px; background: #0a72d8; clip-path: polygon(0 0, 100% 0, 100% 70%, 50% 100%, 0 70%); }
.speed output { margin-left: 10px; }
.modes { margin: 3px 0; }
.avi input { appearance: none; width: 10px; height: 10px; margin: 0; border: 1px solid #555; background: #fff; }
.prev, .next { position: absolute; z-index: 3; }
.prev { left: 5px; top: 230px; opacity: .8; }

/* graphics area */
.view { grid-area: 1 / 2 / 3 / 3; position: relative; background: #fff; overflow: hidden; font-size: 9px; }
.scene { position: absolute; inset: 0; width: 100%; height: 100%; }
.axis { font-size: 6px; }
.tree { position: absolute; left: 3px; top: 23px; display: flex; align-items: center; }
.tree i { border: 3px solid transparent; border-left-color: #222; border-right: 0; margin-right: 8px; }
.tree span { margin-left: 2px; padding-top: 1px; }
.hud { position: absolute; left: 0; right: 0; top: 4px; display: flex; justify-content: center; gap: 4px; }
.hud .dd { width: 5px; }
.docbtns { position: absolute; right: 5px; top: 4px; display: flex; gap: 5px; color: #888; }
.corner { position: absolute; right: 24px; top: 23px; display: flex; gap: 10px; }
.corner .no { margin-top: 17px; }
.info { position: absolute; left: 51%; margin-left: -2px; top: 19px; line-height: 12px; white-space: nowrap; }
.taskpane { position: absolute; right: 0; top: 36px; width: 21px; border: 1px solid #999; border-right: 0; background: #cfcfcf; }
.taskpane button { width: 100%; height: 19px; border-bottom: 1px solid #aaa; }
.taskpane button:last-child { border: 0; height: 18px; }
.taskpane .active { background: #fff; }
.legend { position: absolute; right: 71px; top: 158px; width: 118px; }
.legend figcaption { white-space: nowrap; }
.scale { display: flex; margin-top: 6px; }
.bar, .ticks { height: 301px; margin-top: 15px; }
.bar { width: 20px; margin-left: 1px; background: linear-gradient(#ff1e00, #ff8a00 13%, #fff000 25%, #00d000 50%, #00e8ff 75%, #0080ff 87%, #0010ff); }
.ticks { width: 2px; background: repeating-linear-gradient(#444 0 1px, transparent 1px 25px); }
.scale li { height: 25px; line-height: 25px; padding-left: 8px; }
.step { display: flex; align-items: center; gap: 1px; margin-top: -5px; white-space: nowrap; }
.step button { width: 20px; height: 9px; border: 1px solid #2222b0; color: #2222b0; font-size: 8px; line-height: 7px; font-weight: 600; }
.flap { position: absolute; left: -1px; top: 255px; width: 8px; height: 31px; background: #f5f5f5; border: 1px solid #bbb; }
.flap::before { content: ""; width: 4px; height: 4px; border: 1px solid #999; border-radius: 50%; }
.next { right: 7px; top: 248px; }

/* bottom bars */
.studytabs { display: flex; height: 15px; font-size: 9px; border-top: 2px solid #ddd; background: #f0f0f0; color: #333; }
.steps { display: flex; width: 50px; background: #a4a4ba; }
.steps button { flex: 1; border-right: 1px solid #8c8ca6; }
.tab { padding: 2px 8px 0; background: #c9c9c9; border-right: 1px solid #999; white-space: nowrap; }
.tab.first { padding-left: 13px; }
.tab.motion { padding-right: 12px; }
.tab.study { padding: 2px 7px 0 5px; gap: 4px; }
.study svg { margin-bottom: 4px; }
.tab.study:last-child { padding-left: 6px; padding-right: 14px; gap: 5px; }
.tab.active { background: #eee; font-weight: 700; color: #000; }
.status { display: flex; align-items: center; height: 14px; padding-top: 1px; font-size: 9px; background: #d0d0d0; border-top: 1px solid #aaa; }
.ver { flex: 1; }
.edit { margin-left: 11px; }
.custom { color: #999; margin: 0 17px 0 76px; gap: 12px; }
```
